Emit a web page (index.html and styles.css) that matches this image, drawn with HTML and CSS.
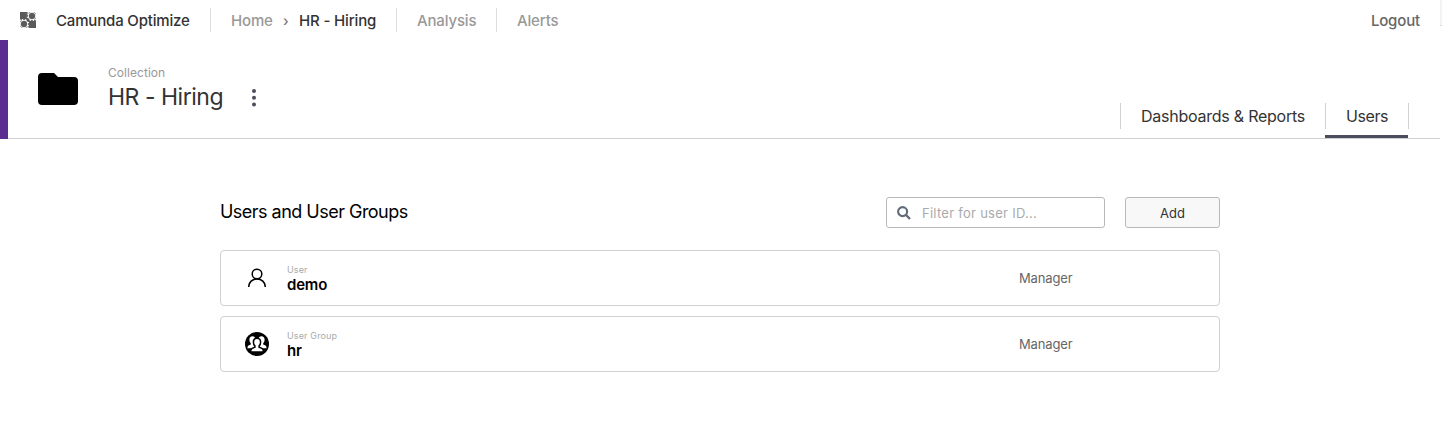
FILE: index.html
```html
<!DOCTYPE html>
<html lang="en">
<head>
<meta charset="utf-8">
<title>Camunda Optimize</title>
<link rel="stylesheet" href="styles.css">
</head>
<body>
<div class="page">
<header class="topbar">
  <svg class="logo" width="16" height="16" viewBox="0 0 16 16">
    <path fill="#5a5a5a" d="M0 0h16v16H0z"/>
    <circle cx="12" cy="4" r="3.800" fill="none" stroke="#fff" stroke-width="1"/>
    <circle cx="4" cy="12" r="3.800" fill="none" stroke="#fff" stroke-width="1"/>
    <path fill="#fff" d="M14.200 0H16v1.800zM14.500 8L16 6.500v2zM0 14.200V16h1.800zM0 7.300l1.500.7L0 9.500zM7.500 0h2L8 1.500zM6.500 16L8 14.500 8.800 16z"/>
    <path stroke="#fff" stroke-width="1.100" d="M6.800 2h2M6.800 5.300h2M10.200 7v2M13.500 7v2M2.500 7v2M5.800 7v2M7 10.500h2M7 13.800h2"/>
  </svg>
  <a class="brand">Camunda Optimize</a>
  <nav class="nav">
    <div class="nav-item crumbs"><a class="home">Home</a><span class="arrow">›</span><a class="current">HR - Hiring</a></div>
    <div class="nav-item analysis"><a>Analysis</a></div>
    <div class="nav-item alerts"><a>Alerts</a></div>
  </nav>
  <a class="logout">Logout</a>
  <span class="edge"></span>
</header>
<section class="collection">
  <svg class="folder" width="40" height="32" viewBox="0 0 40 32"><path d="M4 0h12l4 4h16a4 4 0 0 1 4 4v20a4 4 0 0 1-4 4H4a4 4 0 0 1-4-4V4a4 4 0 0 1 4-4z"/></svg>
  <div class="heading">
    <div class="kind">Collection</div>
    <h1>HR - Hiring</h1>
  </div>
  <svg class="menu" width="4" height="18" viewBox="0 0 4 18" fill="#4c4d5c"><circle cx="2" cy="2" r="2"/><circle cx="2" cy="8.700" r="2"/><circle cx="2" cy="15.400" r="2"/></svg>
  <div class="tabs">
    <div class="tab"><a class="tab-label reports">Dashboards &amp; Reports</a></div>
    <div class="tab active"><a class="tab-label users">Users</a></div>
  </div>
</section>
<main class="content">
  <div class="toolbar">
    <h2>Users and User Groups</h2>
    <label class="search">
      <svg width="14" height="14" viewBox="0 0 14 14" fill="none" stroke="#626b78"><circle cx="5.600" cy="5.600" r="4.500" stroke-width="2.100"/><path d="M9 9l4 4" stroke-width="2.400"/></svg>
      <span>Filter for user ID...</span>
    </label>
    <button class="add">Add</button>
  </div>
  <div class="row">
    <div class="icon"><svg width="18" height="20" viewBox="0 0 18 20" fill="none" stroke="#000" stroke-width="1.500"><circle cx="9" cy="6" r="4.800"/><path d="M.7 19C.7 14.200 4.500 10.900 9 10.900s8.300 3.300 8.300 8.100"/></svg></div>
    <div class="identity"><div class="type">User</div><div class="name demo">demo</div></div>
    <div class="role">Manager</div>
  </div>
  <div class="row">
    <div class="icon"><svg width="24" height="24" viewBox="0 0 24 24"><circle cx="12" cy="12" r="12"/><g fill="#fff"><path d="M7.500 4.300c2 0 3.200 1.500 3.100 3.500 0 1.500-.6 2.700-1.400 3.400v1.300l2.800 1.300v2.500H2.500c0-1.500.2-2.300 1-2.700l2.300-1.100v-1.300C5 10.400 4.400 9.300 4.400 7.800c0-2 1.100-3.500 3.100-3.500z"/><path d="M16.500 4.300c-2 0-3.200 1.500-3.100 3.500 0 1.500.6 2.700 1.400 3.400v1.300L12 13.800v2.500h9.500c0-1.500-.2-2.300-1-2.700l-2.300-1.100v-1.300c.8-.8 1.400-1.900 1.400-3.400 0-2-1.100-3.500-3.100-3.500z"/><path stroke="#000" stroke-width="1.500" d="M12 6.200c2.300 0 3.700 1.700 3.600 4 0 1.600-.7 2.900-1.500 3.700v1.300l2.800 1.200c1.100.5 1.500 1.500 1.500 3.600H5.600c0-2.100.4-3.100 1.500-3.600l2.800-1.200v-1.300c-.8-.8-1.500-2.100-1.500-3.700 0-2.300 1.300-4 3.600-4z"/></g></svg></div>
    <div class="identity"><div class="type group">User Group</div><div class="name hr">hr</div></div>
    <div class="role">Manager</div>
  </div>
</main>
</div>
</body>
</html>
```
FILE: styles.css
```css
* { box-sizing: border-box; }
body { margin: 0; background: #fff; color: #000; font-family: Inter, "Liberation Sans", sans-serif; }
.page { height: 422px; overflow: hidden; }
.topbar { position: relative; display: flex; align-items: center; height: 40px; padding-left: 20px; font-size: 15px; font-weight: 500; line-height: 24px; letter-spacing: -.15px; white-space: nowrap; }
.logo { margin-right: 20px; }
.brand { width: 154px; color: #333; letter-spacing: -.17px; }
.nav { display: flex; }
.nav-item { height: 24px; padding-top: 1px; padding-left: 20px; border-left: 1px solid #ddd; color: #999; }
.crumbs { display: flex; width: 186px; }
.analysis { width: 100px; }
.home { width: 52px; }
.arrow { width: 16px; color: #777; font-size: 14px; }
.current { color: #333; }
.brand, .logout { padding-top: 1px; }
.logout { margin-left: auto; margin-right: 22px; color: #666; }
.edge { position: absolute; right: 0; top: 0; width: 2px; height: 26px; background: #f3f3f3; border-bottom: 1px solid #ddd; }
.collection { display: flex; width: 1440px; height: 99px; padding-left: 30px; border-left: 8px solid #5c2d91; background: linear-gradient(#d0d0d0, #d0d0d0) bottom / 100% 1px no-repeat; }
.folder { margin-top: 33px; }
.heading { width: 144px; margin-left: 30px; padding-top: 25px; white-space: nowrap; }
.kind { color: #999; font-size: 12px; line-height: 16px; letter-spacing: .05px; }
h1 { margin: 1px 0 0; color: #333; font-size: 23px; font-weight: 400; line-height: 30px; letter-spacing: -.48px; }
.menu { margin-top: 49px; }
.tabs { display: flex; margin: 63px 31px 0 auto; height: 36px; border-right: 1px solid #d0d0d0; border-image: linear-gradient(#d0d0d0 26px, transparent 26px) 1; }
.tab { height: 35px; color: #333; font-size: 16px; line-height: 27px; letter-spacing: -.24px; white-space: nowrap; }
.tab-label { display: block; height: 26px; padding: 0 20px; border-left: 1px solid #d0d0d0; }
.reports { width: 205px; }
.users { width: 83px; letter-spacing: -.4px; }
.active { border-bottom: 3px solid #4c4d5c; }
.content { width: 1000px; margin: 58px 0 0 220px; }
.toolbar { display: flex; height: 31px; margin-bottom: 22px; }
h2 { margin: 0 auto 0 0; font-size: 18px; font-weight: 400; line-height: 30px; letter-spacing: -.52px; }
.search { display: flex; align-items: center; width: 219px; padding-left: 10px; border: 1px solid #b8b8b8; border-radius: 3px; color: #aaa; font-size: 13px; letter-spacing: .27px; }
.search span { margin-left: 11px; padding-top: 1px; }
.add { width: 95px; margin-left: 20px; padding: 1px 0 0; border: 1px solid #b8b8b8; border-radius: 3px; background: #f8f8f8; color: #333; font: 13px Inter, sans-serif; }
.row { display: flex; align-items: center; height: 56px; margin-bottom: 10px; border: 1px solid #d0d0d0; border-radius: 4px; }
.icon { display: flex; justify-content: center; width: 24px; margin-left: 24px; }
.identity { width: 732px; margin-left: 18px; padding-top: 2px; }
.type { color: #aaa; font-size: 9px; line-height: 12px; letter-spacing: .14px; }
.name { font-size: 15px; font-weight: 600; line-height: 18px; letter-spacing: -.2px; }
.role { margin-top: -1px; color: #666; font-size: 13px; letter-spacing: -.15px; }
```
